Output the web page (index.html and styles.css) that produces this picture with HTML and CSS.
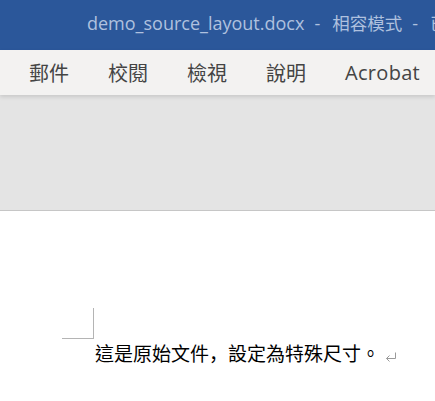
FILE: index.html
```html
<!DOCTYPE html>
<html lang="zh-Hant">
<head>
<meta charset="utf-8">
<link rel="stylesheet" href="styles.css">
</head>
<body>
<div class="window">
  <header class="titlebar">
    <span class="title-part">demo_source_layout.docx</span>
    <span class="sep">-</span>
    <span class="title-part cjk">相容模式</span>
    <span class="sep">-</span>
    <span class="title-part cjk">已儲存到這台電腦</span>
  </header>
  <nav class="tabs">
    <span class="tab">郵件</span>
    <span class="tab">校閱</span>
    <span class="tab">檢視</span>
    <span class="tab">說明</span>
    <span class="tab latin">Acrobat</span>
  </nav>
  <div class="canvas"></div>
  <main class="page">
    <div class="corner-mark"></div>
    <p class="para">這是原始文件<span class="punct" lang="ja">，</span>設定為特殊尺寸。<svg class="return" width="12" height="10" viewBox="0 0 12 10"><path d="M10.5 0.5 V6.5 H1.5 M4.5 3.5 L1.5 6.5 L4.5 9.5" fill="none" stroke="#9a9a9a" stroke-width="1"/></svg></p>
  </main>
</div>
</body>
</html>
```

FILE: styles.css
```css
html, body {
  margin: 0;
  padding: 0;
  background: #ffffff;
}
.window {
  width: 435px;
  height: 401px;
  overflow: hidden;
  display: flex;
  flex-direction: column;
}
.titlebar {
  height: 50px;
  flex: none;
  background: #2b579a;
  padding-left: 87px;
  white-space: nowrap;
  overflow: hidden;
  box-sizing: border-box;
  display: flex;
  align-items: center;
  padding-bottom: 4px;
  font-family: "Open Sans", "Noto Sans CJK TC", sans-serif;
  font-size: 18px;
  line-height: 24px;
  color: #afc1df;
}
.title-part {
  flex: none;
}
.title-part.cjk {
  font-family: "Noto Sans CJK TC", sans-serif;
  font-size: 17.5px;
}
.sep {
  flex: none;
  margin: 0 12px 0 10px;
}
.tabs {
  height: 45px;
  flex: none;
  background: #f3f2f1;
  display: flex;
  align-items: center;
  gap: 39px;
  padding-left: 29px;
  box-sizing: border-box;
  position: relative;
  z-index: 1;
  box-shadow: 0 2px 4px rgba(0, 0, 0, 0.12);
}
.tab {
  font-family: "Noto Sans CJK TC", sans-serif;
  font-size: 20px;
  line-height: 24px;
  color: #444444;
  white-space: nowrap;
}
.tab.latin {
  font-family: "Open Sans", sans-serif;
  font-size: 20px;
  letter-spacing: 0.3px;
}
.canvas {
  height: 115px;
  flex: none;
  background: #e4e4e4;
  border-bottom: 1px solid #c6c6c6;
}
.page {
  flex: 1;
  background: #ffffff;
  padding-top: 97px;
}
.corner-mark {
  width: 31px;
  height: 30px;
  margin-left: 62px;
  border-right: 1px solid #b4b4b4;
  border-bottom: 1px solid #b4b4b4;
}
.para {
  margin: 0;
  padding-left: 95px;
  font-family: "Noto Sans CJK TC", sans-serif;
  font-size: 19px;
  line-height: 28px;
  color: #000000;
  white-space: nowrap;
  text-spacing-trim: space-all;
}
.punct {
  font-family: "Noto Sans CJK JP", sans-serif;
}
.return {
  margin-left: 5px;
  vertical-align: -1px;
}
```
